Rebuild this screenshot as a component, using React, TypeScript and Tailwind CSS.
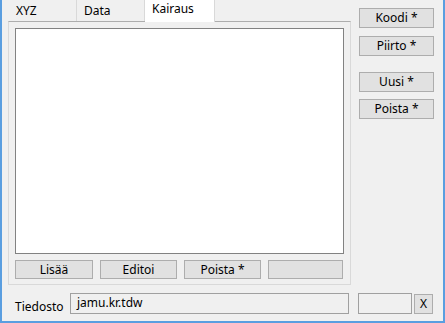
import React from "react";

const font = { fontFamily: '"Noto Sans", "Open Sans", "Liberation Sans", sans-serif' };

function Btn({ label, w, h = 19 }: { label: string; w: string; h?: number }) {
  return (
    <div
      className={`${w} ${h === 20 ? "h-[20px]" : "h-[19px]"} bg-[#e1e1e1] border border-[#adadad] flex items-center justify-center text-[12px] leading-none text-black`}
    >
      {label}
    </div>
  );
}

export default function App() {
  return (
    <div
      className="w-[445px] h-[323px] bg-[#f0f0f0] border-l-2 border-r-2 border-b-2 border-[#5a9ee0] flex flex-col overflow-hidden"
      style={font}
    >
      <div className="flex h-[285px]">
        {/* left column */}
        <div className="pl-[6px] flex flex-col">
          <div className="flex h-[22px] relative z-10">
            <div className="w-[69px] h-[21px] border-r border-[#d9d9d9] bg-[#f0f0f0] text-[12px] text-black pl-[8px] pt-[5px] leading-none">
              XYZ
            </div>
            <div className="w-[68px] h-[21px] border-r border-[#d9d9d9] bg-[#f0f0f0] text-[12px] text-black pl-[7px] pt-[5px] leading-none">
              Data
            </div>
            <div className="w-[70px] h-[22px] bg-white border-r border-[#d9d9d9] text-[12px] text-black pl-[7px] pt-[3px] leading-none">
              Kairaus
            </div>
          </div>
          <div className="-mt-px w-[343px] h-[264px] border border-[#d9d9d9] border-t-[#adadad] pl-[6px] pt-[6px]">
            <div className="w-[329px] h-[226px] bg-white border border-[#828282]" />
            <div className="flex gap-[7px] mt-[6px]">
              <Btn label="Lisää" w="w-[78px]" />
              <Btn label="Editoi" w="w-[77px]" />
              <Btn label="Poista *" w="w-[77px]" />
              <Btn label="" w="w-[75px]" />
            </div>
          </div>
        </div>
        {/* right column */}
        <div className="ml-[8px] pt-[8px] flex flex-col">
          <Btn label="Koodi *" w="w-[75px]" h={20} />
          <div className="mt-[8px]">
            <Btn label="Piirto *" w="w-[75px]" h={20} />
          </div>
          <div className="mt-[16px]">
            <Btn label="Uusi *" w="w-[75px]" h={20} />
          </div>
          <div className="mt-[7px]">
            <Btn label="Poista *" w="w-[75px]" h={20} />
          </div>
        </div>
      </div>
      {/* bottom row */}
      <div className="flex mt-[8px] h-[21px] items-start">
        <div className="w-[68px] pl-[13px] pt-[8px] text-[12px] text-black leading-none">
          Tiedosto
        </div>
        <div className="w-[279px] h-[21px] border border-[#a0a0a0] bg-[#f0f0f0] text-[12px] text-black leading-none pl-[6px] pt-[3px]">
          jamu.kr.tdw
        </div>
        <div className="ml-[9px] w-[54px] h-[21px] border border-[#a0a0a0] bg-[#f0f0f0]" />
        <div className="ml-[2px] mt-px w-[19px] h-[20px] bg-[#e1e1e1] border border-[#adadad] flex items-center justify-center text-[12px] text-black leading-none">
          X
        </div>
      </div>
    </div>
  );
}
